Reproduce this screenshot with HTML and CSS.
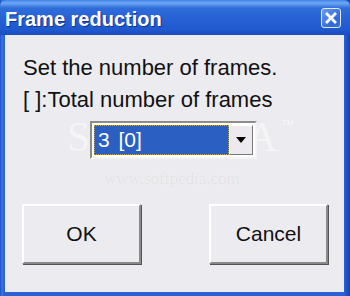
FILE: index.html
```html
<!DOCTYPE html>
<html lang="en">
<head>
    <meta charset="UTF-8">
    <title>Frame reduction</title>
    <link rel="stylesheet" href="styles.css">
</head>
<body>
    <div class="window">
        <div class="titlebar">
            <span class="title">Frame reduction</span>
            <div class="close">
                <svg width="12" height="12" viewBox="0 0 12 12">
                    <path d="M2 2 L10 10 M10 2 L2 10" stroke="#fff" stroke-width="2.8" stroke-linecap="square"/>
                </svg>
            </div>
        </div>
        <div class="client">
            <div class="mark">SOFTPEDIA</div>
            <div class="tm">TM</div>
            <div class="url">www.softpedia.com</div>
            <p class="line">Set the number of frames.</p>
            <p class="line">[ ]:Total number of frames</p>
            <div class="combo">
                <div class="combo-value"><span>3 [0]</span></div>
                <div class="combo-arrow">
                    <svg width="10" height="6" viewBox="0 0 10 6"><path d="M0 0 H10 L5 6 Z" fill="#000"/></svg>
                </div>
            </div>
            <div class="buttons">
                <button class="btn">OK</button>
                <button class="btn">Cancel</button>
            </div>
        </div>
    </div>
</body>
</html>
```

FILE: styles.css
```css
body{
    margin: 0;
    font-family: "Liberation Sans", Arial, sans-serif;
    background-color: #ece9ec;
}
.window{
    width: 350px;
    height: 296px;
    box-sizing: border-box;
    display: flex;
    flex-direction: column;
    background: linear-gradient(to right, #1c4fc9, #3a74e0 2px, #2a62d6 4px, #2a62d6 344px, #1e52c8 347px, #163fa8);
    padding: 0 6px 4px 5px;
}
.titlebar{
    height: 35px;
    margin: 0 -6px 0 -5px;
    padding: 0 9px 0 5px;
    display: flex;
    align-items: center;
    justify-content: space-between;
    background: linear-gradient(to bottom, #3d83ec 0, #6fa8f2 3px, #2f6ddb 8px, #2660d4 20px, #2058cd 30px, #1a4cbf 35px);
    border-radius: 6px 6px 0 0;
}
.title{
    color: #fff;
    font-weight: bold;
    font-size: 20px;
    text-shadow: 1px 1px 0 #0c3396;
    margin-top: 3px;
}
.close{
    width: 18px;
    height: 18px;
    border: 1px solid #dfe9fb;
    border-radius: 3px;
    background: linear-gradient(135deg, #6a9cf0, #3068da 70%, #3b72e0);
    display: flex;
    justify-content: center;
    align-items: center;
    margin-top: 1px;
}
.client{
    position: relative;
    flex: 1;
    background-color: #ecebef;
    padding: 17px 0 0 18px;
    overflow: hidden;
}
.line{
    position: relative;
    margin: 0;
    font-size: 22px;
    line-height: 32px;
    color: #111;
}
.combo{
    position: relative;
    margin: 5px 0 0 67px;
    width: 167px;
    height: 38px;
    box-sizing: border-box;
    border: 2px solid;
    border-color: #8c8c8c #f4f4f4 #f4f4f4 #8c8c8c;
    background: #fff;
    display: flex;
    padding: 2px;
}
.combo-value{
    flex: 1;
    background: #2b5fc2;
    border: 1px dotted #c9a23a;
    display: flex;
    align-items: center;
    padding-left: 3px;
    color: #fff;
    font-size: 21px;
    word-spacing: 3px;
}
.combo-arrow{
    width: 24px;
    box-sizing: border-box;
    background: #eceaee;
    border: 1px solid;
    border-color: #fff #777 #777 #fff;
    display: flex;
    justify-content: center;
    align-items: center;
}
.buttons{
    position: relative;
    display: flex;
    justify-content: space-between;
    margin: 45px 16px 0 -1px;
}
.btn{
    width: 119px;
    height: 60px;
    font-family: "Liberation Sans", Arial, sans-serif;
    font-size: 21px;
    color: #111;
    background: #ecebef;
    border: 2px solid;
    border-color: #fff #8a8a8a #8a8a8a #fff;
    box-shadow: 1px 1px 0 #555;
    padding: 0;
}
.mark{
    position: absolute;
    left: 62px;
    top: 78px;
    font-family: "Liberation Serif", serif;
    font-size: 42px;
    letter-spacing: -2px;
    color: rgba(255,255,255,0.5);
}
.tm{
    position: absolute;
    left: 277px;
    top: 83px;
    font-size: 8px;
    color: rgba(255,255,255,0.7);
}
.url{
    position: absolute;
    left: 99px;
    top: 134px;
    font-family: "Liberation Serif", serif;
    font-size: 17px;
    color: #e2e1e5;
    text-shadow: 0 0 1px #fff;
}
```
